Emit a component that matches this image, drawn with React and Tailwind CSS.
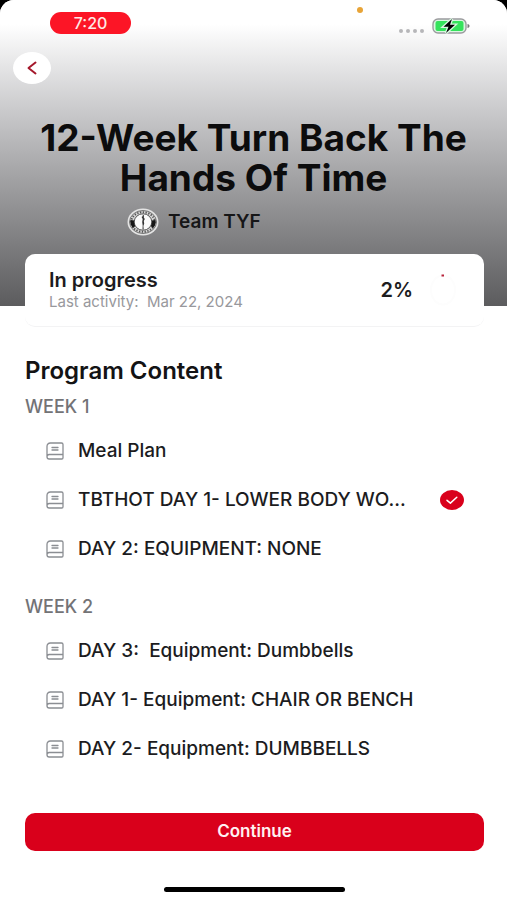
import React from "react";

const weeks = [
  {
    title: "WEEK 1",
    lessons: [
      { name: "Meal Plan" },
      { name: "TBTHOT DAY 1- LOWER BODY WO...", done: true },
      { name: "DAY 2: EQUIPMENT: NONE" },
    ],
  },
  {
    title: "WEEK 2",
    lessons: [
      { name: "DAY 3:  Equipment: Dumbbells" },
      { name: "DAY 1- Equipment: CHAIR OR BENCH" },
      { name: "DAY 2- Equipment: DUMBBELLS" },
    ],
  },
];

function Battery() {
  return (
    <svg viewBox="0 0 38 18" className="h-[18px] w-[38px]" aria-hidden="true">
      <rect x="1" y="2" width="33" height="14" rx="5" fill="#d9f7e0" stroke="#9b9b9e" strokeWidth="1.4" />
      <rect x="3.500" y="4" width="28" height="10" rx="2" fill="#35e35c" />
      <path d="M35.500 7v4c1.300-.3 2-1 2-2s-.7-1.700-2-2z" fill="#77777a" />
      <path d="M20 2l-8.500 7.800h5l-2.500 6.200 9-8.200h-5z" fill="#000" stroke="#d9f7e0" strokeWidth="2.600" paintOrder="stroke" />
    </svg>
  );
}

function TeamLogo() {
  return (
    <svg viewBox="0 0 32 28" className="h-7 w-8" aria-hidden="true">
      <ellipse cx="16" cy="14" rx="15.500" ry="13.500" fill="#e4e4e4" />
      <ellipse cx="16" cy="14" rx="13.500" ry="11.500" fill="#d4d4d4" stroke="#5a5a5a" strokeWidth="0.8" />
      <ellipse cx="16" cy="14" rx="11.800" ry="9.800" fill="none" stroke="#555" strokeWidth="2" strokeDasharray="1.300 1.500" />
      <path d="M3.500 12c-.5 3.300.5 6 2.500 8l3-2.500c-1.300-1.600-1.600-3-1.500-5zM28.500 12c.5 3.300-.5 6-2.500 8l-3-2.500c1.300-1.600 1.600-3 1.500-5z" fill="#161616" />
      <ellipse cx="16" cy="14" rx="8.800" ry="8.200" fill="#fbfbfb" stroke="#333" strokeWidth="0.8" />
      <path d="M15.500 6.500l1.500 1-.2 2 1 1.500-1 2 .4 2.500-.8 2.500.3 3.500h-1.200l.2-4-.5-3.500.5-3-1.100-2 1.300-1z" fill="#333" />
    </svg>
  );
}

function LessonIcon() {
  return (
    <svg viewBox="0 0 18 18" className="size-[18px] shrink-0" fill="none" stroke="#8b8e93" strokeWidth="1.300" strokeLinecap="round" strokeLinejoin="round" aria-hidden="true">
      <path d="M1 14.700V4.500Q1 1 4.500 1H15.500Q17 1 17 2.500V12.500H3.200Q1 12.500 1 14.700Q1 17 3.200 17H15.800Q17 17 17 15.800V12.500" />
      <path d="M6 5.500H12M6 8H12" />
    </svg>
  );
}

function DoneMark() {
  return (
    <svg viewBox="0 0 24 20" className="h-5 w-6 shrink-0" role="img" aria-label="Completed">
      <ellipse cx="12" cy="10" rx="12" ry="10" fill="#d9001b" />
      <path d="M7 10.300l3.400 2.800 6.400-5.800" fill="none" stroke="#fff" strokeWidth="1.500" strokeLinecap="round" strokeLinejoin="round" />
    </svg>
  );
}

function Week({ title, lessons }) {
  return (
    <section>
      <h3 className="text-[18px] leading-5 font-medium text-[#737376]">{title}</h3>
      <ul className="pt-[9px]">
        {lessons.map((lesson) => (
          <li key={lesson.name}>
            <a href="#lesson" className="flex h-[49px] items-center gap-[14px] pr-5 pl-[21px]">
              <LessonIcon />
              <span className="min-w-0 flex-1 text-[19px] leading-6 font-medium whitespace-pre text-[#1c1c1e]">{lesson.name}</span>
              {lesson.done && <DoneMark />}
            </a>
          </li>
        ))}
      </ul>
    </section>
  );
}

export default function App() {
  return (
    <div className="bg-black font-[Inter,sans-serif]">
      <div className="flex min-h-screen flex-col rounded-t-[14px] bg-white">
        <header className="rounded-t-[14px] bg-linear-to-b from-white from-8% via-[#cacacc] via-36% to-[#5c5c5e] pb-[70px]">
          <div className="flex h-[46px] items-center justify-between pr-[37px] pl-[50px]">
            <div className="flex h-[22px] w-[81px] items-center justify-center rounded-full bg-[#fc1526] text-[16px] font-medium text-[#ffe9e6]">7:20</div>
            <div className="flex h-full items-center gap-2 pt-[5px]">
              <span className="mr-7 mb-8 size-[6px] rounded-full bg-[#e8a437]" />
              <span className="flex gap-[3px] pt-[10px]">
                <i className="size-1 rounded-full bg-[#b6b6b9]" />
                <i className="size-1 rounded-full bg-[#b6b6b9]" />
                <i className="size-1 rounded-full bg-[#b6b6b9]" />
                <i className="size-1 rounded-full bg-[#b6b6b9]" />
              </span>
              <Battery />
            </div>
          </div>
          <div className="flex px-[13px] pt-[6px]">
            <button type="button" aria-label="Back" className="flex h-8 w-[38px] items-center justify-center rounded-[50%] bg-white">
              <svg viewBox="0 0 10 14" className="h-[14px] w-[10px]" fill="none" stroke="#a5182b" strokeWidth="2" strokeLinecap="round" strokeLinejoin="round" aria-hidden="true">
                <path d="M8.500 1.500L1.500 7L8.500 12.500" />
              </svg>
            </button>
          </div>
          <h1 className="px-7 pt-[34px] text-center text-[37px] leading-10 font-bold text-[#0c0c0d]">
            12-Week Turn Back The
            <br />
            Hands Of Time
          </h1>
          <div className="flex items-center gap-[9px] pt-[10px] pl-[127px]">
            <TeamLogo />
            <span className="text-[19px] leading-6 font-semibold text-[#161617]">Team TYF</span>
          </div>
        </header>

        <main className="relative -mt-[52px] flex flex-1 flex-col pr-[23px] pl-[25px]">
          <section className="flex h-[73px] items-center justify-between rounded-[10px] border-b border-[#f3f3f4] bg-white pr-7 pl-6">
            <div>
              <h2 className="text-[20px] leading-6 font-semibold text-[#1c1c1e]">In progress</h2>
              <p className="text-[15px] leading-5 whitespace-pre text-[#98989c]">Last activity:  Mar 22, 2024</p>
            </div>
            <div className="flex items-center gap-[17px]">
              <span className="text-[20px] leading-6 font-semibold text-[#1c1c1e]">2%</span>
              <svg viewBox="0 0 26 32" className="h-8 w-[26px]" aria-hidden="true">
                <ellipse cx="13" cy="16" rx="12" ry="14.500" fill="none" stroke="#fdfdfd" strokeWidth="2" />
                <path d="M11.500 1.500h2.500" stroke="#b8233a" strokeWidth="2" />
              </svg>
            </div>
          </section>

          <h2 className="pt-[30px] text-[24px] leading-7 font-semibold text-[#131314]">Program Content</h2>
          <div className="flex flex-col gap-[24px] pt-3">
            {weeks.map((week) => (
              <Week key={week.title} {...week} />
            ))}
          </div>

          <div className="mt-auto pt-6">
            <button type="button" className="h-[38px] w-full rounded-[10px] bg-[#d9001b] text-[17px] font-semibold text-[#fff1f1]">
              Continue
            </button>
          </div>
          <div className="mx-auto mt-9 mb-2 h-[5px] w-[181px] rounded-full bg-black" />
        </main>
      </div>
    </div>
  );
}
